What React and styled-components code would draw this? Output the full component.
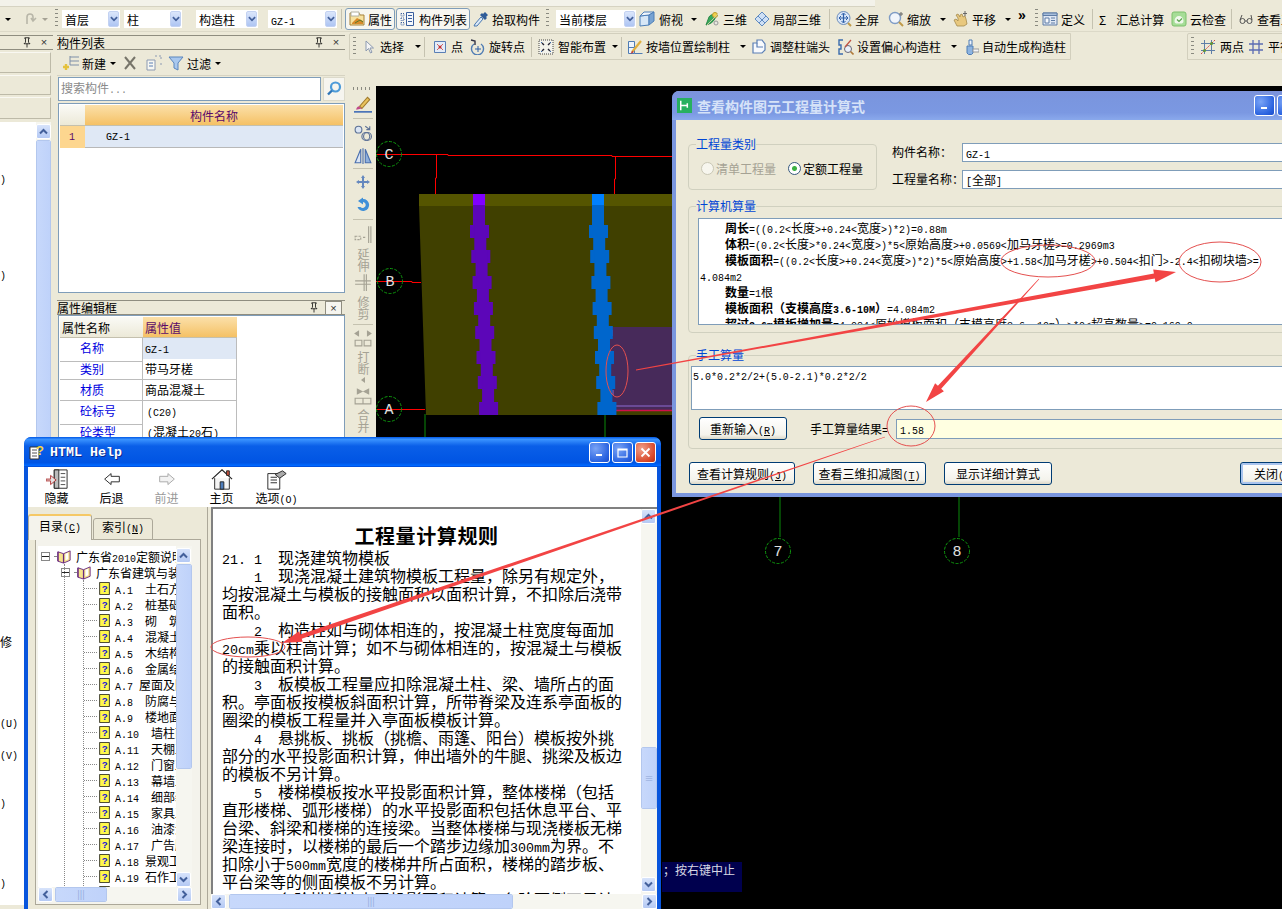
import React from 'react';
import styled, { createGlobalStyle } from 'styled-components';

const Global = createGlobalStyle`
  html, body { margin: 0; padding: 0; background: #ece9d8; }
  body { font-family: "Noto Sans CJK SC", "Liberation Sans", sans-serif; font-size: 12px; color: #000; }
  * { box-sizing: border-box; }
`;

const Lat = styled.span`
  font-family: "Liberation Mono", monospace;
  font-size: 0.8333em;
  white-space: pre;
`;

// SimSun latin is half of a cjk cell wide, so ascii runs go through a mono span
const T = ({ children }) => (
  <span>
    {String(children).split(/([\x20-\x7e]+)/).map((s, i) => (i % 2 ? <Lat key={i}>{s}</Lat> : s))}
  </span>
);

const Hot = ({ label, k }) => (
  <span><T>{label + '('}</T><u><T>{k}</T></u><T>)</T></span>
);

const Page = styled.div`
  position: relative;
  width: 1282px;
  height: 909px;
  overflow: hidden;
  display: flex;
  flex-direction: column;
  background: #ece9d8;
`;

const TopStrip = styled.div`
  height: 7px;
  flex: none;
  background: #f3f2ea;
  border-bottom: 1px solid #d6d3c2;
  margin-right: 407px;
`;

const ToolRow = styled.div`
  height: 25px;
  flex: none;
  display: flex;
  align-items: center;
  background: #ece9d8;
  border-bottom: 1px solid #dcd9c8;
  white-space: nowrap;
`;

const Grip = styled.div`
  width: 3px;
  height: 20px;
  flex: none;
  margin: ${(p) => p.$m || '0 4px'};
  background: repeating-linear-gradient(to bottom, #8a8a80 0 1px, transparent 1px 4px);
`;

const Sep = styled.div`
  width: 1px;
  height: 20px;
  flex: none;
  margin: ${(p) => p.$m || '0 4px'};
  background: #c5c2b0;
`;

const ToolItem = styled.div`
  display: flex;
  align-items: center;
  gap: ${(p) => p.$gap ?? 3}px;
  height: 22px;
  flex: none;
  width: ${(p) => (p.$w ? p.$w + 'px' : 'auto')};
  margin-left: ${(p) => p.$ml || 0}px;
  color: ${(p) => (p.$off ? '#a5a294' : '#000')};
`;

const ToggleItem = styled(ToolItem)`
  border: 1px solid #7f9db9;
  border-radius: 3px;
  background: #f7f6f0;
  padding-left: 3px;
`;

const Overflow = styled.span`
  width: 15px;
  flex: none;
  height: 22px;
  font-family: "Liberation Sans", sans-serif;
  font-size: 14px;
  font-weight: 700;
  line-height: 15px;
`;

const Caret = styled.span`
  width: 0;
  height: 0;
  flex: none;
  margin-left: ${(p) => p.$ml ?? 4}px;
  border-left: 3px solid transparent;
  border-right: 3px solid transparent;
  border-top: 3px solid ${(p) => p.$c || '#000'};
`;

const SideCaret = styled.span`
  width: 0;
  height: 0;
  border-top: 3px solid transparent;
  border-bottom: 3px solid transparent;
  border-right: 4px solid #a5a294;
`;

const ComboBox = styled.div`
  width: ${(p) => p.$w}px;
  height: 18px;
  flex: none;
  margin-right: ${(p) => p.$mr ?? 4}px;
  background: #fff;
  display: flex;
  align-items: center;
  justify-content: space-between;
  padding-left: 3px;
`;

const ComboBtn = styled.div`
  width: 11px;
  height: 16px;
  margin-right: 1px;
  border-radius: 2px;
  background: linear-gradient(#dbe6fb, #aec5f3);
  border: 1px solid #c3d2f2;
  display: flex;
  align-items: center;
  justify-content: center;
`;

const ChevronSvg = styled.svg`
  display: block;
  transform: rotate(${(p) => ({ down: 0, up: 180, left: 90, right: -90 }[p.$dir])}deg);
`;

const Chevron = ({ dir = 'down', c = '#43609b', s = 9 }) => (
  <ChevronSvg width={s} height={s} viewBox="0 0 9 9" $dir={dir}>
    <path d="M1 2.500 4.500 6 8 2.500" fill="none" stroke={c} strokeWidth="2" />
  </ChevronSvg>
);

const Combo = ({ w, children, mr }) => (
  <ComboBox $w={w} $mr={mr}>
    <T>{children}</T>
    <ComboBtn><Chevron s={8} /></ComboBtn>
  </ComboBox>
);

const IcoSvg = styled.svg`
  flex: none;
  display: block;
`;

const Ico = ({ s = 16, children, vb = '0 0 16 16' }) => (
  <IcoSvg width={s} height={s} viewBox={vb}>{children}</IcoSvg>
);

const icons = {
  redo: <path d="M4 13V6a3 3 0 0 1 6 0v3M8 7l2 3 3-3" fill="none" stroke="#b8b6a8" strokeWidth="1.600" />,
  attr: <g><path d="M1 2h9l1 2h4v10H1z" fill="#f7e2a0" stroke="#a5813a" /><path d="M2 1h8v4H2z" fill="#fff" stroke="#b0b0a0" /><path d="M3 12l5-5 6 3v3H3z" fill="#d88a2a" /><path d="M6 12l5-3 3 2" stroke="#5a7a2a" fill="none" /></g>,
  list: <g fill="none" stroke="#3a5f9e"><path d="M1 2.500h3v2.500H1zM1 7h3v2.500H1zM1 11.500h3V14H1z" strokeDasharray="1 1" /><path d="M6.500 1.500h7v13h-7z" fill="#f4f7fc" /><path d="M8 4.500h4M8 7.500h4M8 10.500h4" /></g>,
  dropper: <g><path d="M2 13l6-7 2 2-6 7-3 0z" fill="#dbe9f8" stroke="#4a78b0" /><path d="M7 4l5 5 2-2-1-1 2-2-3-3-2 2-1-1z" fill="#2f5c98" /></g>,
  cube: <g stroke="#4d7fb8"><path d="M1 5l9-1v10l-9 1z" fill="#d7e7f6" /><path d="M1 5l4-4h10l-5 3z" fill="#eef5fc" /><path d="M10 4l5-3v9l-5 4z" fill="#78a3d2" /></g>,
  tri3d: <g><path d="M2 14l3-8c2-3 5-3 7-1-1 4-4 7-7 8z" fill="#38a85c" stroke="#2c8a48" /><circle cx="11" cy="4" r="2.500" fill="#f2d04c" stroke="#b89a2c" /><circle cx="12" cy="12" r="2" fill="#e8e8e0" stroke="#999" /><path d="M3 14l11-11" stroke="#c9c9a0" /></g>,
  part3d: <g fill="#cfe0f5" stroke="#5f8ac0"><path d="M1 8l7-7 7 7-7 7z" /><path d="M4 5l7 7M8 1l7 7M1 8l7 7M12 5l-7 7M8 1L1 8" fill="none" /></g>,
  full: <g><circle cx="7.500" cy="7" r="6.500" fill="#d9e6f8" stroke="#6b8dbd" /><path d="M7.500 2.500v9M3 7h9" stroke="#2d5ea8" strokeWidth="1.200" /><path d="M5.500 4l2-2 2 2M5.500 10l2 2 2-2M5 5L3 7l2 2M10 5l2 2-2 2" fill="none" stroke="#2d5ea8" /><path d="M12 12l3 3" stroke="#c09a4a" strokeWidth="2" /></g>,
  zoom: <g><circle cx="7" cy="7" r="5.500" fill="#f1f5fb" stroke="#7f9cc5" strokeWidth="1.400" /><path d="M11 11l4 4" stroke="#c09a4a" strokeWidth="2" /><path d="M13 1v4M11 3h4" stroke="#666" /></g>,
  pan: <g><path d="M4 15L1 9l2-1 2 2V7L3 4l2-1 2 3V4l2-1 1 3 2-1 1 3 1 5-3 2z" fill="#e8c87e" stroke="#a58a4c" strokeWidth=".8" /><path d="M12 0v5M10 2.500h4" stroke="#666" /></g>,
  define: <g stroke="#5f7da6"><path d="M1 2h14v12H1z" fill="#dfe7f3" /><path d="M1 2h14v2.500H1z" fill="#a7bedb" /><path d="M3 7h4v5H3zM9 7h4M9 9.500h4M9 12h4" fill="#f7f9fc" /></g>,
  cloud: <g><rect x="1" y="1" width="14" height="14" rx="2" fill="#a6dd97" stroke="#7cc06c" /><path d="M3.500 10c0-3 2-5 4.500-5s4.500 2 4.500 5-2 2.500-4.500 2.500-4.500 .5-4.500-2.500z" fill="#f0f8ec" /><path d="M6 8.500l2 2 3-3" fill="none" stroke="#58a24a" strokeWidth="1.200" /></g>,
  glasses: <g fill="none" stroke="#555"><circle cx="4.500" cy="10" r="2.500" /><circle cx="11.500" cy="10" r="2.500" /><path d="M7 10h2M2 9l2-5M14 9l-1-5" /></g>,
  cursor: <path d="M5 2v10l2.500-2.500L9.500 14l1.500-.8L9 9h3.500z" fill="#f4f4f4" stroke="#8d9ab0" />,
  point: <g><path d="M2.500 2.500h11v11h-11z" fill="#e3ecf8" stroke="#5a7fb5" /><path d="M5 5l6 6M11 5l-6 6" stroke="#d06060" /><circle cx="8" cy="8" r="1.500" fill="#c83030" /></g>,
  rotatePt: <g fill="none" stroke="#4f7cb4"><path d="M4 5a6 6 0 1 0 7 0" strokeWidth="1.400" /><path d="M1 1l4 1v4" stroke="#334" strokeWidth="1.400" /><path d="M8 7v6M5 10h6" stroke="#2d5ea8" /></g>,
  smart: <g><path d="M1 1h14v14H1z" fill="#f3f3ec" stroke="#444" strokeDasharray="1 1" /><path d="M4 4l2 2M12 4l-2 2M4 12l2-2M12 12l-2-2" stroke="#223" strokeWidth="1.400" /><path d="M3 3h1v1H3zM12 3h1v1h-1zM3 12h1v1H3zM12 12h1v1h-1z" fill="#3a6bad" /></g>,
  wallCol: <g><path d="M1.500 2.500h6v12h-6zM1.500 8.500h6M7.500 14.500h8" fill="#eef4fb" stroke="#4f7cb4" /><path d="M5 13L14 2" stroke="#e0b040" strokeWidth="2.200" /><path d="M3.500 15L5 12l2 1z" fill="#c03030" /></g>,
  adjust: <g fill="#f8fafd" stroke="#5a7fb5" strokeWidth="1.200"><path d="M2 4h4V1h5l3 4v6l-3 3H2z" /><path d="M6 4v4h6" fill="none" /></g>,
  offset: <g><path d="M5 1H1v5h2v4H1v5h4" fill="none" stroke="#3a6bad" strokeWidth="1.400" /><circle cx="10" cy="10" r="3.500" fill="#eaf1fa" stroke="#667" /><path d="M12.500 12.500l3 3" stroke="#b07a3a" strokeWidth="1.600" /><path d="M7 8l6-7" stroke="#c05040" strokeWidth="1.200" /></g>,
  autogen: <g stroke="#4f7cb4"><path d="M6 1h3v5H6z" fill="#eef3fb" /><path d="M4 7h6v7l-1.500 1.500h-3L4 14z" fill="#8db4e0" /><path d="M10 10h6v3h-6z" fill="#f4f6fa" stroke="#999" /></g>,
  twoPt: <g><path d="M4.500 1v14M11.500 1v14M1 4.500h14M1 11.500h14" stroke="#5f7ea8" /><path d="M1 15L15 1" stroke="#d84040" strokeDasharray="2 1" /><circle cx="4.500" cy="11.500" r="1.500" fill="#5a9a3a" /><circle cx="11.500" cy="4.500" r="1.500" fill="#5a9a3a" /></g>,
  parallel: <path d="M5 1v14M11 1v14M1 5h14M1 11h14" stroke="#5b6cb3" strokeWidth="1.300" />,
  newItem: <g><path d="M7 2h9M7 6h9M7 10h9" stroke="#7f8fa8" /><path d="M7 1v9" stroke="#7f8fa8" /><path d="M3 9v6M0 12h6" stroke="#e5c23c" strokeWidth="2.400" /></g>,
  del: <path d="M3 2l10 12M13 2L3 14" stroke="#77756a" strokeWidth="2" />,
  copy: <g fill="#f7f7f2" stroke="#8c9ab2"><path d="M1 5h8v10H1z" /><path d="M9 1h2M13 1h2v4M15 8v3" fill="none" strokeDasharray="2 1" /><path d="M3 8h4M3 11h4" stroke="#5a7fb5" /></g>,
  filter: <path d="M1 2h14l-5 6v7l-4-2V8z" fill="#a9c8ee" stroke="#5a85bd" />,
  search: <g fill="none"><circle cx="9.500" cy="6" r="4.500" stroke="#4d9bd8" strokeWidth="2.200" /><path d="M6 9.500l-4 4" stroke="#2f76b8" strokeWidth="2.400" /></g>,
  pin: <path d="M4 1h6v1H9v5l2 2H3l2-2V2H4zM7 9v5" fill="none" stroke="#000" />,
  brush: <g><path d="M5 10l7-8 2 2-7 8z" fill="#e9c25c" stroke="#a07a2c" /><path d="M4 10c-2 1-2 3-2 3l5-1z" fill="#c04a8a" /><path d="M0 15h16" stroke="#3c69b5" strokeWidth="1.400" /></g>,
  mirrorCopy: <g fill="none" stroke="#5c7196"><circle cx="4" cy="5" r="3" fill="#dbe5f3" /><circle cx="10.500" cy="11" r="3.500" /><circle cx="12" cy="11" r="3.500" /><path d="M10 2l4 3m0-3v3h-3" /></g>,
  mirror: <g stroke="#4a6fae"><path d="M1 14L6 2v12z" fill="#dbe5f3" /><path d="M15 14L10 2v12z" fill="#8fb0dc" /><path d="M8 1v14" /></g>,
  move: <path d="M8 1l2 3H9v3h3V6l3 2-3 2V9H9v3h1l-2 3-2-3h1V9H4v1L1 8l3-2v1h3V4H6z" fill="#6487be" />,
  rotate: <path d="M8 2a6 6 0 1 1-5.500 8h3A3 3 0 1 0 8 5v2.500L3 4l5-3.500z" fill="#3f8fd8" />,
  extend: <g stroke="#a5a294" fill="none"><path d="M1 10h5v3H1zM8 11h3" strokeDasharray="2 1" /><path d="M13 1v15M15 1v15" /></g>,
  cut: <g stroke="#a5a294" fill="none"><path d="M1 7h14M1 10h14" /><path d="M9 1v15M11 1v15" /></g>,
  breakIco: <g fill="#a5a294" stroke="#a5a294"><path d="M1 4l3-2v4zM15 4l-3-2v4z" /><path d="M1 10h6v5H1zM9 10h6v5H9z" fill="none" /></g>,
  merge: <g fill="#a5a294" stroke="#a5a294"><path d="M7 4L3 2v4zM9 4l4-2v4z" /><path d="M1 10h14v5H1zM8 10v5" fill="none" /></g>,
  hide: <g><path d="M9 1h14v20H9z" fill="#fff" stroke="#222" /><path d="M9 1h5v20H9z" fill="#bbb" stroke="#222" /><path d="M16 5h5M16 9h5M16 13h5M16 17h5" stroke="#444" /><path d="M0 11h5V7l6 5-6 5v-4H0z" fill="#e6e6e6" stroke="#b03030" /></g>,
  back: <path d="M4 11l7-6v3h9v6h-9v3z" fill="#fff" stroke="#222" />,
  forward: <path d="M20 11l-7-6v3H4v6h9v3z" fill="#f2f2f2" stroke="#a5a5a5" />,
  home: <g stroke="#222"><path d="M1 11L12 1l11 10" fill="none" strokeWidth="1.300" /><path d="M4 10v12h16V10" fill="#f5f5f5" /><path d="M10 14h4v8h-4z" fill="#4d7dbc" /><path d="M17 2h3v5h-3z" fill="#c9523e" /></g>,
  options: <g stroke="#222"><path d="M2 5h13v17H2z" fill="#fff" /><path d="M5 9h7M5 12h7M5 15h7" /><path d="M10 6l8-4 4 3-7 5z" fill="#aaa" /></g>,
  helpLogo: <g><path d="M1 3h9v12H1z" fill="#fff" stroke="#333" /><path d="M3 6h5M3 9h5M3 12h5" stroke="#555" /><text x="7" y="11" fontSize="13" fontWeight="700" fontFamily="Liberation Sans" fill="#f7d23e">?</text></g>,
  greenLogo: <g><rect x="0" y="0" width="16" height="16" fill="#28b060" /><path d="M4 3v10M4 8h7M11 5.500v5" stroke="#fff" strokeWidth="1.600" /></g>,
  book: <g><path d="M1 3l6 2 7-3v10l-7 3-6-2z" fill="#f7e48c" stroke="#6a2a80" /><path d="M1 3v10M7 5v10" stroke="#6a2a80" strokeWidth="1.400" /><path d="M9 5v7l3-1V4z" fill="#fff" /></g>,
  topic: <g><path d="M0 0h12v15H0z" fill="#fff84c" stroke="#111" /><text x="2.500" y="12" fontSize="12" fontWeight="700" fontFamily="Liberation Sans" fill="#1414d8">?</text></g>,
};

const Body = styled.div`
  flex: 1;
  display: flex;
  min-height: 0;
`;

/* ---------- left docks ---------- */
const LeftDock = styled.div`
  width: 53px;
  flex: none;
  display: flex;
  flex-direction: column;
  padding-top: 3px;
`;

const DockTitle = styled.div`
  height: 15px;
  flex: none;
  margin-top: ${(p) => p.$mt || 0}px;
  display: flex;
  align-items: center;
  justify-content: flex-end;
  gap: 5px;
  padding-right: 3px;
  background: #ece9d8;
  border-top: 1px solid #8f8d80;
  border-bottom: 1px solid #8f8d80;
  font-size: 12px;
  line-height: 13px;
`;

const DockName = styled.span`
  margin-right: auto;
`;

const CloseX = styled.span`
  font-family: "Liberation Sans", sans-serif;
  font-size: 11px;
  color: #333;
  width: 12px;
  text-align: center;
`;

const BoxedX = styled(CloseX)`
  width: 17px;
  border: 1px solid #8f8d80;
  background: #f6f5ef;
  line-height: 12px;
`;

const Slab = styled.div`
  height: ${(p) => p.$h}px;
  flex: none;
  margin: 2px 2px 0 0;
  background: #ece9d8;
  border-bottom: 1px solid #bdbaa8;
  border-right: 1px solid #bdbaa8;
  border-top: 1px solid #f9f8f2;
`;

const LeftList = styled.div`
  flex: 1;
  margin: 3px 2px 4px 0;
  background: #fff;
  display: flex;
  justify-content: space-between;
  overflow: hidden;
`;

const LeftRows = styled.div`
  display: flex;
  flex-direction: column;
`;

const LeftRow = styled.div`
  height: 16px;
  flex: none;
  line-height: 16px;
  white-space: nowrap;
`;

const Spacer = styled.div`
  flex: 1;
  min-width: 0;
`;

const ScrollV = styled.div`
  width: ${(p) => p.$w || 15}px;
  flex: none;
  display: flex;
  flex-direction: column;
  gap: 1px;
  background: #f6f6f0;
  padding-top: ${(p) => p.$pt || 0}px;
  padding-bottom: ${(p) => p.$pb || 0}px;
`;

const ScrollH = styled.div`
  height: 15px;
  flex: none;
  display: flex;
  gap: 1px;
  background: #f6f6f0;
`;

const ScrollBtn = styled.div`
  width: ${(p) => p.$w || 15}px;
  height: 15px;
  flex: none;
  border: 1px solid #fff;
  border-radius: 2px;
  background: linear-gradient(#d7e3fb, #b4c9f4);
  display: flex;
  align-items: center;
  justify-content: center;
`;

const Thumb = styled.div`
  flex: ${(p) => (p.$grow ? 1 : 'none')};
  height: ${(p) => (p.$h ? p.$h + 'px' : 'auto')};
  width: ${(p) => (p.$w ? p.$w + 'px' : 'auto')};
  margin: ${(p) => p.$m || 0};
  border: 1px solid #fff;
  outline: 1px solid #b3c7ee;
  outline-offset: -1px;
  border-radius: 2px;
  background: linear-gradient(to right, #c7d8fb, #bfd2fa);
  display: flex;
  align-items: center;
  justify-content: center;
  color: #8da6d6;
  font-size: 9px;
  line-height: 9px;
`;

const CompDock = styled.div`
  width: 294px;
  flex: none;
  display: flex;
  flex-direction: column;
  padding: 3px 2px 0 4px;
`;

const DockBar = styled.div`
  height: 25px;
  flex: none;
  display: flex;
  align-items: center;
  gap: 6px;
  padding-left: 6px;
  margin-top: 1px;
  border-bottom: 1px solid #d6d3c2;
`;

const SearchRow = styled.div`
  height: 24px;
  flex: none;
  margin: 1px 0 2px 1px;
  display: flex;
  gap: 2px;
`;

const SearchInput = styled.div`
  flex: 1;
  background: #fff;
  border: 1px solid #7f9db9;
  color: #8a8a8a;
  padding: 2px;
  line-height: 16px;
`;

const SearchBtn = styled.div`
  width: 22px;
  display: flex;
  align-items: center;
  justify-content: center;
  background: #f6f5ef;
  border: 1px solid #dcdacb;
`;

const GridBox = styled.div`
  height: ${(p) => p.$h}px;
  flex: none;
  margin-left: 1px;
  background: #fff;
  border: 1px solid #7f9db9;
  padding: 1px;
  overflow: hidden;
`;

const GridRow = styled.div`
  display: grid;
  grid-template-columns: ${(p) => p.$cols};
  height: ${(p) => p.$h}px;
  width: ${(p) => (p.$w ? p.$w + 'px' : 'auto')};
`;

const HeadCell = styled.div`
  display: flex;
  align-items: center;
  justify-content: ${(p) => (p.$left ? 'flex-start' : 'center')};
  padding-left: ${(p) => (p.$left ? 2 : 0)}px;
  color: ${(p) => (p.$plain ? '#000' : '#5a0a6a')};
  background: ${(p) => (p.$plain ? 'linear-gradient(#fafaf6,#ece9d8)' : 'linear-gradient(#fbe0aa,#f5c165)')};
  border-bottom: 1px solid #c4c0ae;
`;

const RowNo = styled.div`
  background: #fdd68f;
  color: #5a0a6a;
  padding-left: 9px;
  line-height: 18px;
`;

const NameCell = styled.div`
  background: #dfe8f5;
  border-bottom: 1px solid #b8b8b8;
  padding-left: 21px;
  line-height: 18px;
`;

const PropKey = styled.div`
  color: #0000e0;
  padding-left: 20px;
  line-height: 20px;
  border-bottom: 1px solid #bcbcbc;
  border-right: 1px solid #bcbcbc;
`;

const PropVal = styled.div`
  background: ${(p) => (p.$sel ? '#dfe8f5' : '#fff')};
  padding-left: ${(p) => p.$pl ?? 2}px;
  line-height: 20px;
  border-bottom: 1px solid #bcbcbc;
  border-right: 1px solid #bcbcbc;
  white-space: nowrap;
`;

/* ---------- workspace ---------- */
const Workspace = styled.div`
  flex: 1;
  display: flex;
  flex-direction: column;
  min-width: 0;
`;

const BarsRow = styled.div`
  height: 54px;
  flex: none;
  display: flex;
  align-items: flex-start;
  padding-top: 1px;
`;

const FloatBar = styled.div`
  height: 27px;
  flex: none;
  display: flex;
  align-items: center;
  margin-left: ${(p) => p.$ml || 0}px;
  width: ${(p) => (p.$w ? p.$w + 'px' : 'auto')};
  background: #ece9d8;
  border: 1px solid #d2cfbd;
  border-radius: 2px 0 0 0;
  white-space: nowrap;
`;

const CanvasRow = styled.div`
  flex: 1;
  display: flex;
  min-height: 0;
  padding-left: 3px;
`;

const VBar = styled.div`
  width: 26px;
  flex: none;
  display: flex;
  flex-direction: column;
  align-items: center;
  background: #ece9d8;
`;

const VGrip = styled.div`
  width: 20px;
  height: 3px;
  margin: 1px 0 3px;
  flex: none;
  background: repeating-linear-gradient(to right, #8a8a80 0 1px, transparent 1px 4px);
`;

const VSep = styled.div`
  width: 20px;
  height: 1px;
  flex: none;
  margin: ${(p) => p.$m || '3px 0'};
  background: #c5c2b0;
`;

const VBtn = styled.div`
  height: ${(p) => p.$h}px;
  flex: none;
  display: flex;
  align-items: center;
  justify-content: center;
`;

const VLabel = styled.div`
  writing-mode: vertical-rl;
  text-orientation: upright;
  white-space: nowrap;
  color: #a5a294;
  font-size: 12px;
  line-height: 14px;
  padding-top: 2px;
  height: ${(p) => p.$h}px;
  flex: none;
`;

const Canvas = styled.div`
  flex: 1;
  background: #000;
  min-width: 0;
`;

const CanvasSvg = styled.svg`
  display: block;
  width: 906px;
  height: 823px;
`;

const StatusTip = styled.div`
  position: absolute;
  left: 662px;
  top: 862px;
  width: 80px;
  height: 30px;
  background: #00004e;
  color: #d8d8e4;
  line-height: 16px;
  padding-left: 1px;
  white-space: nowrap;
  overflow: hidden;
`;

/* ---------- windows ---------- */
const HelpWindow = styled.div`
  position: absolute;
  left: 24px;
  top: 437px;
  width: 637px;
  height: 472px;
  display: flex;
  flex-direction: column;
  background: #0855dd;
  border-radius: 7px 7px 0 0;
  padding: 0 4px;
  overflow: hidden;
`;

const TitleBar = styled.div`
  height: ${(p) => p.$h}px;
  flex: none;
  margin: 0 -4px;
  padding: 0 5px;
  display: flex;
  align-items: center;
  gap: 5px;
  border-radius: 7px 7px 0 0;
  background: ${(p) =>
    p.$inactive
      ? 'linear-gradient(#7c93dc, #7a96df 30%, #7b98e2 75%, #8aa9ec)'
      : 'linear-gradient(#0058e6, #3a93ff 8%, #0a5fe8 30%, #0054e3 85%, #0068ff 95%, #0044cc)'};
`;

const HelpTitle = styled.span`
  font-family: "Liberation Mono", monospace;
  font-size: 13.33px;
  font-weight: 700;
  color: #fff;
  text-shadow: 1px 1px #0a2a90;
`;

const DialogTitle = styled.span`
  font-size: 14px;
  font-weight: 700;
  color: #d6e2f8;
`;

const WinBtns = styled.div`
  margin-left: auto;
  margin-right: ${(p) => p.$mr || 0}px;
  display: flex;
  gap: 2px;
`;

const WinBtn = styled.div`
  width: 21px;
  height: 21px;
  border: 1px solid #fff;
  border-radius: 3px;
  background: ${(p) =>
    p.$close
      ? 'radial-gradient(circle at 30% 30%, #f0a08a, #d8482a 70%, #b53012)'
      : 'radial-gradient(circle at 30% 30%, #7aa4f6, #2a63e0 70%, #1c4cc8)'};
  display: flex;
  align-items: center;
  justify-content: center;
`;

const HelpBar = styled.div`
  height: 40px;
  flex: none;
  display: flex;
  background: #fff;
  padding-left: 1px;
`;

const HelpTool = styled.div`
  width: 55px;
  display: flex;
  flex-direction: column;
  align-items: center;
  padding-top: 2px;
  color: ${(p) => (p.$off ? '#9a9a9a' : '#000')};
  line-height: 14px;
  white-space: nowrap;
`;

const Panes = styled.div`
  flex: 1;
  display: flex;
  min-height: 0;
`;

const NavPane = styled.div`
  width: 180px;
  flex: none;
  background: #ece9d8;
  padding-top: 7px;
  border-right: 1px solid #aca899;
`;

const Tabs = styled.div`
  display: flex;
  align-items: flex-end;
  height: 26px;
  position: relative;
  z-index: 1;
`;

const Tab = styled.div`
  width: ${(p) => p.$w}px;
  height: ${(p) => (p.$active ? 26 : 22)}px;
  margin-left: ${(p) => p.$ml || 0}px;
  padding-bottom: ${(p) => (p.$active ? 6 : 5)}px;
  display: flex;
  align-items: center;
  justify-content: center;
  background: ${(p) => (p.$active ? '#f4f3ec' : '#ece9d8')};
  border: 1px solid #aca899;
  border-bottom: ${(p) => (p.$active ? 'none' : '1px solid #aca899')};
  border-radius: 3px 3px 0 0;
  border-top: ${(p) => (p.$active ? '2px solid #f5c865' : '1px solid #aca899')};
`;

const TabBody = styled.div`
  margin: -1px 6px 0 7px;
  height: 366px;
  padding: 6px 8px 2px 2px;
  background: #f4f3ec;
  border: 1px solid #aca899;
  display: flex;
  flex-direction: column;
`;

const TreeArea = styled.div`
  flex: 1;
  display: flex;
  min-height: 0;
`;

const Tree = styled.div`
  flex: 1;
  min-width: 0;
  background: #fff;
  overflow: hidden;
  padding-top: 2px;
`;

const TreeRow = styled.div`
  height: 16px;
  display: flex;
  align-items: center;
  gap: 4px;
  white-space: nowrap;
  padding-left: ${(p) => p.$pl || 0}px;
  margin-left: ${(p) => p.$ml || 0}px;
`;

const Expander = styled.span`
  width: 9px;
  height: 9px;
  flex: none;
  border: 1px solid #888;
  background: linear-gradient(to bottom, transparent 3px, #222 3px 4px, transparent 4px);
`;

const Twig = styled.span`
  width: ${(p) => p.$w}px;
  flex: none;
  border-top: 1px dotted #888;
  margin-right: -3px;
`;

const Branch = styled.div`
  margin-left: ${(p) => p.$ml}px;
  border-left: 1px dotted #888;
`;

const DocPane = styled.div`
  flex: 1;
  min-width: 0;
  display: flex;
  flex-direction: column;
  background: #ece9d8;
  padding-left: 3px;
`;

const DocWrap = styled.div`
  flex: 1;
  min-height: 0;
  display: flex;
  border-top: 2px solid #808080;
  border-left: 2px solid #808080;
  background: #fff;
`;

const Doc = styled.div`
  flex: 1;
  min-width: 0;
  padding: 14px 0 0 9px;
  overflow: hidden;
  font-size: 16px;
  white-space: nowrap;
`;

const DocTitle = styled.div`
  font-size: 20px;
  font-weight: 700;
  line-height: 25px;
  height: 25px;
  text-align: center;
  letter-spacing: 0.6px;
  padding-right: 10px;
`;

const DocLine = styled.div`
  height: 18px;
  line-height: 18px;
`;

const Dialog = styled.div`
  position: absolute;
  left: 672px;
  top: 91px;
  width: 640px;
  height: 406px;
  display: flex;
  flex-direction: column;
  background: #ece9d8;
  border: 4px solid #7a96df;
  border-top: none;
  border-radius: 7px 7px 0 0;
`;

const DialogBody = styled.div`
  flex: 1;
  padding: 17px 0 0 12px;
  display: flex;
  flex-direction: column;
`;

const TopFields = styled.div`
  height: 62px;
  flex: none;
  display: flex;
`;

const Group = styled.fieldset`
  margin: ${(p) => p.$mt || 0}px 0 0;
  border: 1px solid #d0d0bf;
  border-radius: 4px;
  width: ${(p) => (p.$w ? p.$w + 'px' : 'auto')};
  height: ${(p) => p.$h}px;
  flex: none;
  padding: ${(p) => p.$pad};
  min-width: 0;
`;

const Legend = styled.legend`
  padding: 0;
  margin-left: ${(p) => p.$ml}px;
  color: #0046d5;
  line-height: 14px;
  font-size: 12px;
`;

const Radios = styled.div`
  display: flex;
  align-items: center;
  height: 18px;
`;

const Radio = styled.span`
  width: 13px;
  height: 13px;
  flex: none;
  margin-left: ${(p) => p.$ml || 0}px;
  margin-right: 2px;
  border-radius: 50%;
  border: 1px solid ${(p) => (p.$off ? '#c9c7b5' : '#36597f')};
  background: ${(p) => (p.$on ? 'radial-gradient(circle, #3cb043 0 2px, #fff 3px)' : '#f7f6ee')};
`;

const RadioText = styled.span`
  color: ${(p) => (p.$off ? '#a5a294' : '#000')};
`;

const Fields = styled.div`
  margin-left: 15px;
  padding-top: 6px;
  flex: 1;
  display: flex;
  flex-direction: column;
  gap: 8px;
`;

const FieldRow = styled.div`
  display: flex;
  align-items: center;
  height: 19px;
`;

const FieldLabel = styled.span`
  width: 70px;
  flex: none;
  white-space: nowrap;
  line-height: 15px;
  height: 17px;
`;

const Input = styled.div`
  flex: 1;
  height: ${(p) => p.$h || 19}px;
  border: 1px solid #7f9db9;
  background: ${(p) => p.$bg || '#fff'};
  padding-left: 3px;
  line-height: 17px;
`;

const CalcBox = styled.div`
  height: 107px;
  background: #fff;
  border: 1px solid #7f9db9;
  padding: 1px 0 0 1px;
  overflow: hidden;
  white-space: nowrap;
`;

const CalcLine = styled.div`
  height: 16px;
  line-height: 16px;
  padding-left: ${(p) => (p.$flush ? 0 : 25)}px;
`;

const CalcHead = styled.b`
  font-weight: 700;
`;

const ManualBox = styled.div`
  height: 44px;
  background: #fff;
  border: 1px solid #7f9db9;
  padding: 0 1px;
  line-height: 16px;
`;

const ManualRow = styled.div`
  display: flex;
  align-items: center;
  margin: 7px 0 0 8px;
  height: 23px;
`;

const XpButton = styled.div`
  width: ${(p) => p.$w}px;
  height: 23px;
  flex: none;
  margin-left: ${(p) => p.$ml || 0}px;
  display: flex;
  align-items: center;
  justify-content: center;
  white-space: nowrap;
  border: 1px solid #003c74;
  border-radius: 3px;
  background: linear-gradient(#ffffff, #f4f3ec 80%, #dcd8c8);
  box-shadow: ${(p) => (p.$main ? 'inset 0 0 0 2px #a9c4ee' : 'none')};
`;

const ResultLabel = styled.span`
  margin: 0 8px 0 23px;
  flex: none;
`;

const ButtonRow = styled.div`
  display: flex;
  margin: 13px 0 0 1px;
`;

const AnnotationLayer = styled.svg`
  position: absolute;
  inset: 0;
  width: 1282px;
  height: 909px;
  pointer-events: none;
  z-index: 5;
`;

/* ---------- data ---------- */
const helpLines = [
  '21. 1  现浇建筑物模板',
  '    1  现浇混凝土建筑物模板工程量，除另有规定外，',
  '均按混凝土与模板的接触面积以面积计算，不扣除后浇带',
  '面积。',
  '    2  构造柱如与砌体相连的，按混凝土柱宽度每面加',
  '20cm乘以柱高计算；如不与砌体相连的，按混凝土与模板',
  '的接触面积计算。',
  '    3  板模板工程量应扣除混凝土柱、梁、墙所占的面',
  '积。亭面板按模板斜面积计算，所带脊梁及连系亭面板的',
  '圈梁的模板工程量并入亭面板模板计算。',
  '    4  悬挑板、挑板（挑檐、雨篷、阳台）模板按外挑',
  '部分的水平投影面积计算，伸出墙外的牛腿、挑梁及板边',
  '的模板不另计算。',
  '    5  楼梯模板按水平投影面积计算，整体楼梯（包括',
  '直形楼梯、弧形楼梯）的水平投影面积包括休息平台、平',
  '台梁、斜梁和楼梯的连接梁。当整体楼梯与现浇楼板无梯',
  '梁连接时，以楼梯的最后一个踏步边缘加300mm为界。不',
  '扣除小于500mm宽度的楼梯井所占面积，楼梯的踏步板、',
  '平台梁等的侧面模板不另计算。',
  '    6  台阶模板按水平投影面积计算，台阶两侧不另计',
];

const topics = [
  'A.1  土石方工程', 'A.2  桩基础工程', 'A.3  砌  筑工程', 'A.4  混凝土及钢筋', 'A.5  木结构工程',
  'A.6  金属结构工程', 'A.7 屋面及防水', 'A.8  防腐与隔热', 'A.9  楼地面工程', 'A.10  墙柱面工程',
  'A.11  天棚工程', 'A.12  门窗工程', 'A.13  幕墙工程', 'A.14  细部装饰', 'A.15  家具工程',
  'A.16  油漆涂料', 'A.17  广告牌', 'A.18 景观工程', 'A.19 石作工程', 'A.20  其他',
];

const props = [
  ['名称', 'GZ-1', 2, true],
  ['类别', '带马牙槎', 2],
  ['材质', '商品混凝土', 2],
  ['砼标号', '(C20)', 4],
  ['砼类型', '(混凝土20石)', 4],
];

const leftMarks = { 3: ')', 9: ')', 32: '修', 37: '(U)', 39: '(V)', 42: ')', 47: ')' };

// tapered annotation arrow, as the screenshot tool drew them
const taper = (x1, y1, x2, y2, w1, w2, hl, hw) => {
  const len = Math.hypot(x2 - x1, y2 - y1);
  const ux = (x2 - x1) / len;
  const uy = (y2 - y1) / len;
  const nx = -uy;
  const ny = ux;
  const bx = x2 - ux * hl;
  const by = y2 - uy * hl;
  const p = (x, y, w) => `${(x + nx * w).toFixed(1)},${(y + ny * w).toFixed(1)}`;
  const m = (x, y, w) => `${(x - nx * w).toFixed(1)},${(y - ny * w).toFixed(1)}`;
  return [p(x1, y1, w1 / 2), p(bx, by, w2 / 2), p(bx, by, hw / 2), `${x2},${y2}`, m(bx, by, hw / 2), m(bx, by, w2 / 2), m(x1, y1, w1 / 2)].join(' ');
};

const Column = ({ x, top, body, step }) => {
  const spots = [225, 250, 276, 302, 326, 351, 376, 402];
  return (
    <g>
      <rect x={x} y={194} width={12} height={11} fill={top} />
      {spots.map((y, i) => (
        <g key={y} fill={body}>
          <rect x={x + i * step} y={i ? spots[i - 1] : 205} width={12} height={y - (i ? spots[i - 1] : 205)} />
          <rect x={x - 3 + i * step} y={y} width={19} height={13} />
        </g>
      ))}
    </g>
  );
};

const AxisMark = ({ x, y, label }) => (
  <g>
    <circle cx={x} cy={y} r={12.500} fill="none" stroke="#0f9a0f" strokeDasharray="3 1.500" />
    <text x={x} y={y + 5} textAnchor="middle" fontFamily="Liberation Mono" fontSize="15" fill="#e0e0e0">{label}</text>
  </g>
);

const CanvasDrawing = () => (
  <CanvasSvg viewBox="376 86 906 823">
    <path d="M376 154.500H448L448 155.500H612L612 156.500H672" stroke="#f00" strokeWidth="1" fill="none" />
    <path d="M436.500 155V178H435.500V194M615.500 156V179H614.500V195M376 281.500H412V282.500H421M376 409.500H425" stroke="#f00" fill="none" />
    <path d="M425 414V437M605 414V437M780 497V537M959 497V537" stroke="#0a8a0a" fill="none" />
    <path d="M419 205H672V415H426Z" fill="#404000" />
    <path d="M419 194H672V206H419Z" fill="#555500" />
    <path d="M608 327H672V410H609Z" fill="#472a5a" />
    <path d="M612 330v6M613 358v6M613 390v5" stroke="#a060c0" />
    <path d="M610 410.500H672" stroke="#d0104a" strokeWidth="1.500" />
    <path d="M615 406H672" stroke="#6a4a96" strokeWidth="2" />
    <Column x={473} top="#8000ff" body="#5c06b8" step={1.300} />
    <Column x={592} top="#0080ff" body="#0066cc" step={1.200} />
    <AxisMark x={389} y={154} label="C" />
    <AxisMark x={390} y={281} label="B" />
    <AxisMark x={389} y={409} label="A" />
    <AxisMark x={778} y={551} label="7" />
    <AxisMark x={957} y={551} label="8" />
  </CanvasSvg>
);

const ArrowBtnV = ({ dir }) => <ScrollBtn><Chevron dir={dir} /></ScrollBtn>;

export default function App() {
  return (
    <Page>
      <Global />
      <TopStrip />
      <ToolRow>
        <Caret $ml={5} />
        <ToolItem $ml={12} $off><Ico>{icons.redo}</Ico></ToolItem>
        <Caret $ml={3} $c="#a5a294" />
        <Grip $m="0 4px 0 7px" />
        <Combo w={58}>首层</Combo>
        <Combo w={58} mr={14}>柱</Combo>
        <Combo w={62} mr={10}>构造柱</Combo>
        <Combo w={69}>GZ-1</Combo>
        <Sep $m="0 3px 0 0" />
        <ToggleItem $w={50}><Ico>{icons.attr}</Ico>属性</ToggleItem>
        <ToggleItem $w={74} $ml={1}><Ico>{icons.list}</Ico>构件列表</ToggleItem>
        <ToolItem $w={72} $ml={3}><Ico>{icons.dropper}</Ico>拾取构件</ToolItem>
        <Grip $m="0 7px 0 1px" />
        <Combo w={80} mr={3}>当前楼层</Combo>
        <ToolItem $w={59} $gap={4}><Ico>{icons.cube}</Ico>俯视<Caret /></ToolItem>
        <ToolItem $w={49} $ml={6}><Ico>{icons.tri3d}</Ico>三维</ToolItem>
        <ToolItem $w={72} $ml={1}><Ico>{icons.part3d}</Ico>局部三维</ToolItem>
        <Sep $m="0 5px 0 3px" />
        <ToolItem $w={50} $ml={1}><Ico>{icons.full}</Ico>全屏</ToolItem>
        <ToolItem $w={65} $ml={2}><Ico>{icons.zoom}</Ico>缩放<Caret $ml={6} /></ToolItem>
        <ToolItem $w={65}><Ico>{icons.pan}</Ico>平移<Caret $ml={6} /></ToolItem>
        <Overflow>»</Overflow>
        <Grip $m="0 4px 0 2px" />
        <ToolItem $w={47}><Ico>{icons.define}</Ico>定义</ToolItem>
        <Sep $m="0 6px 0 3px" />
        <ToolItem $w={72} $gap={10}>Σ<span>汇总计算</span></ToolItem>
        <ToolItem $w={57}><Ico>{icons.cloud}</Ico>云检查</ToolItem>
        <Sep $m="0 4px 0 3px" />
        <ToolItem $ml={2}><Ico>{icons.glasses}</Ico>查看工程量</ToolItem>
      </ToolRow>
      <Body>
        <LeftDock>
          <DockTitle>
            <Ico s={12} vb="0 0 14 16">{icons.pin}</Ico>
            <CloseX>×</CloseX>
          </DockTitle>
          <Slab $h={21} />
          <Slab $h={20} />
          <Slab $h={22} />
          <LeftList>
            <LeftRows>
              {Array.from({ length: 50 }, (_, i) => (
                <LeftRow key={i}><T>{leftMarks[i] || ''}</T></LeftRow>
              ))}
            </LeftRows>
            <ScrollV $pt={2}>
              <ArrowBtnV dir="up" />
              <Thumb $grow />
            </ScrollV>
          </LeftList>
        </LeftDock>

        <CompDock>
          <DockTitle>
            <DockName>构件列表</DockName>
            <Ico s={12} vb="0 0 14 16">{icons.pin}</Ico>
            <CloseX>×</CloseX>
          </DockTitle>
          <DockBar>
            <ToolItem><Ico>{icons.newItem}</Ico>新建<Caret $ml={1} /></ToolItem>
            <Ico>{icons.del}</Ico>
            <ToolItem $ml={2}><Ico>{icons.copy}</Ico></ToolItem>
            <ToolItem><Ico>{icons.filter}</Ico>过滤<Caret $ml={1} /></ToolItem>
          </DockBar>
          <SearchRow>
            <SearchInput><T>搜索构件...</T></SearchInput>
            <SearchBtn><Ico>{icons.search}</Ico></SearchBtn>
          </SearchRow>
          <GridBox $h={190}>
            <GridRow $cols="25px 1fr" $h={21}>
              <HeadCell $plain />
              <HeadCell>构件名称</HeadCell>
            </GridRow>
            <GridRow $cols="25px 1fr" $h={19}>
              <RowNo><T>1</T></RowNo>
              <NameCell><T>GZ-1</T></NameCell>
            </GridRow>
          </GridBox>
          <DockTitle $mt={7}>
            <DockName>属性编辑框</DockName>
            <Ico s={12} vb="0 0 14 16">{icons.pin}</Ico>
            <BoxedX>×</BoxedX>
          </DockTitle>
          <GridBox $h={140}>
            <GridRow $cols="83px 94px" $h={21} $w={177}>
              <HeadCell $plain $left>属性名称</HeadCell>
              <HeadCell $left>属性值</HeadCell>
            </GridRow>
            {props.map(([k, v, pl, sel]) => (
              <GridRow key={k} $cols="83px 94px" $h={21} $w={177}>
                <PropKey>{k}</PropKey>
                <PropVal $pl={pl} $sel={sel}><T>{v}</T></PropVal>
              </GridRow>
            ))}
          </GridBox>
        </CompDock>

        <Workspace>
          <BarsRow>
            <FloatBar $ml={2} $w={722}>
              <Grip $m="0 5px 0 3px" />
              <ToolItem $w={61}><Ico>{icons.cursor}</Ico>选择<Caret $ml={8} /></ToolItem>
              <Sep $m="0 4px 0 2px" />
              <ToolItem $w={38} $ml={3}><Ico>{icons.point}</Ico>点</ToolItem>
              <ToolItem $w={61}><Ico>{icons.rotatePt}</Ico>旋转点</ToolItem>
              <Sep $m="0 6px 0 0" />
              <ToolItem $w={79} $gap={4}><Ico>{icons.smart}</Ico>智能布置<Caret $ml={2} /></ToolItem>
              <Sep $m="0 5px 0 4px" />
              <ToolItem $w={123}><Ico>{icons.wallCol}</Ico>按墙位置绘制柱<Caret $ml={7} /></ToolItem>
              <ToolItem $w={87} $ml={1}><Ico>{icons.adjust}</Ico>调整柱端头</ToolItem>
              <ToolItem $w={122}><Ico>{icons.offset}</Ico>设置偏心构造柱<Caret $ml={7} /></ToolItem>
              <ToolItem $ml={3}><Ico>{icons.autogen}</Ico>自动生成构造柱</ToolItem>
            </FloatBar>
            <FloatBar $ml={116}>
              <Grip $m="0 6px 0 3px" />
              <ToolItem $w={44} $gap={4}><Ico>{icons.twoPt}</Ico>两点</ToolItem>
              <ToolItem $ml={4} $gap={4}><Ico>{icons.parallel}</Ico>平行</ToolItem>
            </FloatBar>
          </BarsRow>
          <CanvasRow>
            <VBar>
              <VGrip />
              <VBtn $h={22}><Ico s={18}>{icons.brush}</Ico></VBtn>
              <VSep $m="3px 0 2px" />
              <VBtn $h={23}><Ico s={18}>{icons.mirrorCopy}</Ico></VBtn>
              <VBtn $h={23}><Ico s={18}>{icons.mirror}</Ico></VBtn>
              <VSep $m="1px 0" />
              <VBtn $h={23}><Ico s={16}>{icons.move}</Ico></VBtn>
              <VBtn $h={23}><Ico s={16}>{icons.rotate}</Ico></VBtn>
              <VSep $m="3px 0 2px" />
              <VBtn $h={24}><Ico s={18}>{icons.extend}</Ico></VBtn>
              <VLabel $h={24}>延伸</VLabel>
              <VBtn $h={24}><Ico s={18}>{icons.cut}</Ico></VBtn>
              <VLabel $h={26}>修剪</VLabel>
              <VSep $m="4px 0 2px" />
              <VBtn $h={22}><Ico s={18}>{icons.breakIco}</Ico></VBtn>
              <VLabel $h={26}>打断</VLabel>
              <VBtn $h={10}><SideCaret /></VBtn>
              <VBtn $h={22}><Ico s={18}>{icons.merge}</Ico></VBtn>
              <VLabel $h={26}>合并</VLabel>
            </VBar>
            <Canvas><CanvasDrawing /></Canvas>
          </CanvasRow>
        </Workspace>
      </Body>

      <StatusTip>；按右键中止</StatusTip>

      <Dialog>
        <TitleBar $h={29} $inactive>
          <Ico s={15}>{icons.greenLogo}</Ico>
          <DialogTitle>查看构件图元工程量计算式</DialogTitle>
          <WinBtns $mr={9}>
            <WinBtn><svg width="9" height="9"><rect x="1" y="6" width="6" height="2" fill="#fff" /></svg></WinBtn>
            <WinBtn />
          </WinBtns>
        </TitleBar>
        <DialogBody>
          <TopFields>
            <Group $w={189} $h={53} $pad="8px 0 0 12px">
              <Legend $ml={-5}>工程量类别</Legend>
              <Radios>
                <Radio $off />
                <RadioText $off>清单工程量</RadioText>
                <Radio $ml={12} $on />
                <RadioText>定额工程量</RadioText>
              </Radios>
            </Group>
            <Fields>
              <FieldRow><FieldLabel>构件名称：</FieldLabel><Input><T>GZ-1</T></Input></FieldRow>
              <FieldRow><FieldLabel>工程量名称：</FieldLabel><Input><T>[全部]</T></Input></FieldRow>
            </Fields>
          </TopFields>
          <Group $h={134} $pad="5px 0 0 9px">
            <Legend $ml={-2}>计算机算量</Legend>
            <CalcBox>
              <CalcLine><CalcHead>周长</CalcHead><T>=((0.2&lt;长度&gt;+0.24&lt;宽度&gt;)*2)=0.88m</T></CalcLine>
              <CalcLine><CalcHead>体积</CalcHead><T>=(0.2&lt;长度&gt;*0.24&lt;宽度&gt;)*5&lt;原始高度&gt;+0.0569&lt;加马牙槎&gt;=0.2969m3</T></CalcLine>
              <CalcLine><CalcHead>模板面积</CalcHead><T>=((0.2&lt;长度&gt;+0.24&lt;宽度&gt;)*2)*5&lt;原始高度&gt;+1.58&lt;加马牙槎&gt;+0.504&lt;扣门&gt;-2.4&lt;扣砌块墙&gt;=</T></CalcLine>
              <CalcLine $flush><T>4.084m2</T></CalcLine>
              <CalcLine><CalcHead>数量</CalcHead><T>=1根</T></CalcLine>
              <CalcLine><CalcHead>模板面积（支模高度<T>3.6-10M</T>）</CalcHead><T>=4.084m2</T></CalcLine>
              <CalcLine><CalcHead>超过<T>3.6m</T>模板增加量</CalcHead><T>=4.084&lt;原始模板面积（支模高度3.6--10m）&gt;*0&lt;超高数量&gt;=0.169 0</T></CalcLine>
            </CalcBox>
          </Group>
          <Group $h={101} $pad="4px 0 0 2px" $mt={15}>
            <Legend $ml={5}>手工算量</Legend>
            <ManualBox><T>5.0*0.2*2/2+(5.0-2.1)*0.2*2/2</T></ManualBox>
            <ManualRow>
              <XpButton $w={88}><Hot label="重新输入" k="R" /></XpButton>
              <ResultLabel><T>手工算量结果=</T></ResultLabel>
              <Input $bg="#ffffe1" $h={20}><T>1.58</T></Input>
            </ManualRow>
          </Group>
          <ButtonRow>
            <XpButton $w={106}><Hot label="查看计算规则" k="J" /></XpButton>
            <XpButton $w={113} $ml={18}><Hot label="查看三维扣减图" k="T" /></XpButton>
            <XpButton $w={108} $ml={18}>显示详细计算式</XpButton>
            <XpButton $w={70} $ml={188} $main><Hot label="关闭" k="C" /></XpButton>
          </ButtonRow>
        </DialogBody>
      </Dialog>

      <HelpWindow>
        <TitleBar $h={30}>
          <Ico>{icons.helpLogo}</Ico>
          <HelpTitle>HTML Help</HelpTitle>
          <WinBtns>
            <WinBtn><svg width="9" height="9"><rect x="1" y="6" width="6" height="2" fill="#fff" /></svg></WinBtn>
            <WinBtn><svg width="11" height="11"><path d="M1 2h9v8H1zM1 3h9" fill="none" stroke="#fff" strokeWidth="1.200" /></svg></WinBtn>
            <WinBtn $close><svg width="11" height="11"><path d="M1.500 1.500l8 8M9.500 1.500l-8 8" stroke="#fff" strokeWidth="1.800" /></svg></WinBtn>
          </WinBtns>
        </TitleBar>
        <HelpBar>
          <HelpTool><Ico s={22} vb="0 0 24 24">{icons.hide}</Ico>隐藏</HelpTool>
          <HelpTool><Ico s={22} vb="0 0 24 24">{icons.back}</Ico>后退</HelpTool>
          <HelpTool $off><Ico s={22} vb="0 0 24 24">{icons.forward}</Ico>前进</HelpTool>
          <HelpTool><Ico s={22} vb="0 0 24 24">{icons.home}</Ico>主页</HelpTool>
          <HelpTool><Ico s={22} vb="0 0 24 24">{icons.options}</Ico><T>选项(O)</T></HelpTool>
        </HelpBar>
        <Panes>
          <NavPane>
            <Tabs>
              <Tab $w={64} $active><Hot label="目录" k="C" /></Tab>
              <Tab $w={60} $ml={1}><Hot label="索引" k="N" /></Tab>
            </Tabs>
            <TabBody>
              <TreeArea>
                <Tree>
                  <TreeRow $pl={3}>
                    <Expander />
                    <Twig $w={2} />
                    <Ico s={15}>{icons.book}</Ico>
                    <T>广东省2010定额说明</T>
                  </TreeRow>
                  <Branch $ml={26}>
                    <TreeRow $ml={-4}>
                      <Expander />
                      <Twig $w={2} />
                      <Ico s={15}>{icons.book}</Ico>
                      广东省建筑与装饰
                    </TreeRow>
                    <Branch $ml={18}>
                      {topics.map((t) => (
                        <TreeRow key={t}>
                          <Twig $w={13} />
                          <Ico s={13} vb="-.5 -.5 13 16">{icons.topic}</Ico>
                          <T>{t}</T>
                        </TreeRow>
                      ))}
                    </Branch>
                  </Branch>
                </Tree>
                <ScrollV $w={16} $pt={2}>
                  <ArrowBtnV dir="up" />
                  <Thumb $h={205} />
                  <Spacer />
                  <ArrowBtnV dir="down" />
                </ScrollV>
              </TreeArea>
              <ScrollH>
                <ScrollBtn><Chevron dir="left" /></ScrollBtn>
                <Thumb $w={52} $m="0 0 0 1px">|||</Thumb>
                <Spacer />
                <ScrollBtn><Chevron dir="right" /></ScrollBtn>
              </ScrollH>
            </TabBody>
          </NavPane>
          <DocPane>
            <DocWrap>
              <Doc>
                <DocTitle>工程量计算规则</DocTitle>
                {helpLines.map((l) => <DocLine key={l}><T>{l}</T></DocLine>)}
              </Doc>
              <ScrollV $w={16} $pb={2}>
                <ArrowBtnV dir="up" />
                <Thumb $h={62} $m="222px 0 0">≡</Thumb>
                <Spacer />
                <ArrowBtnV dir="down" />
              </ScrollV>
            </DocWrap>
            <ScrollH>
              <ScrollBtn><Chevron dir="left" /></ScrollBtn>
              <Thumb $w={284} $m="0 0 0 2px">|||</Thumb>
              <Spacer />
              <ScrollBtn><Chevron dir="right" /></ScrollBtn>
            </ScrollH>
          </DocPane>
        </Panes>
      </HelpWindow>

      <AnnotationLayer viewBox="0 0 1282 909">
        <g fill="none" stroke="#e4504f" strokeWidth="1">
          <ellipse cx="617" cy="371" rx="11" ry="26" />
          <ellipse cx="1048" cy="261" rx="47" ry="16" />
          <ellipse cx="1220" cy="262" rx="41" ry="20" />
          <ellipse cx="911" cy="426" rx="24" ry="20" />
          <ellipse cx="248" cy="647" rx="37" ry="10" />
        </g>
        <g fill="#f24444">
          <polygon points={taper(636, 370, 1176, 272, 1, 5, 22, 13)} />
          <polygon points={taper(1039, 279, 926, 402, 0.6, 4.500, 20, 12)} />
          <polygon points={taper(885, 437, 282, 643, 0.6, 4.500, 20, 11)} />
        </g>
      </AnnotationLayer>
    </Page>
  );
}
